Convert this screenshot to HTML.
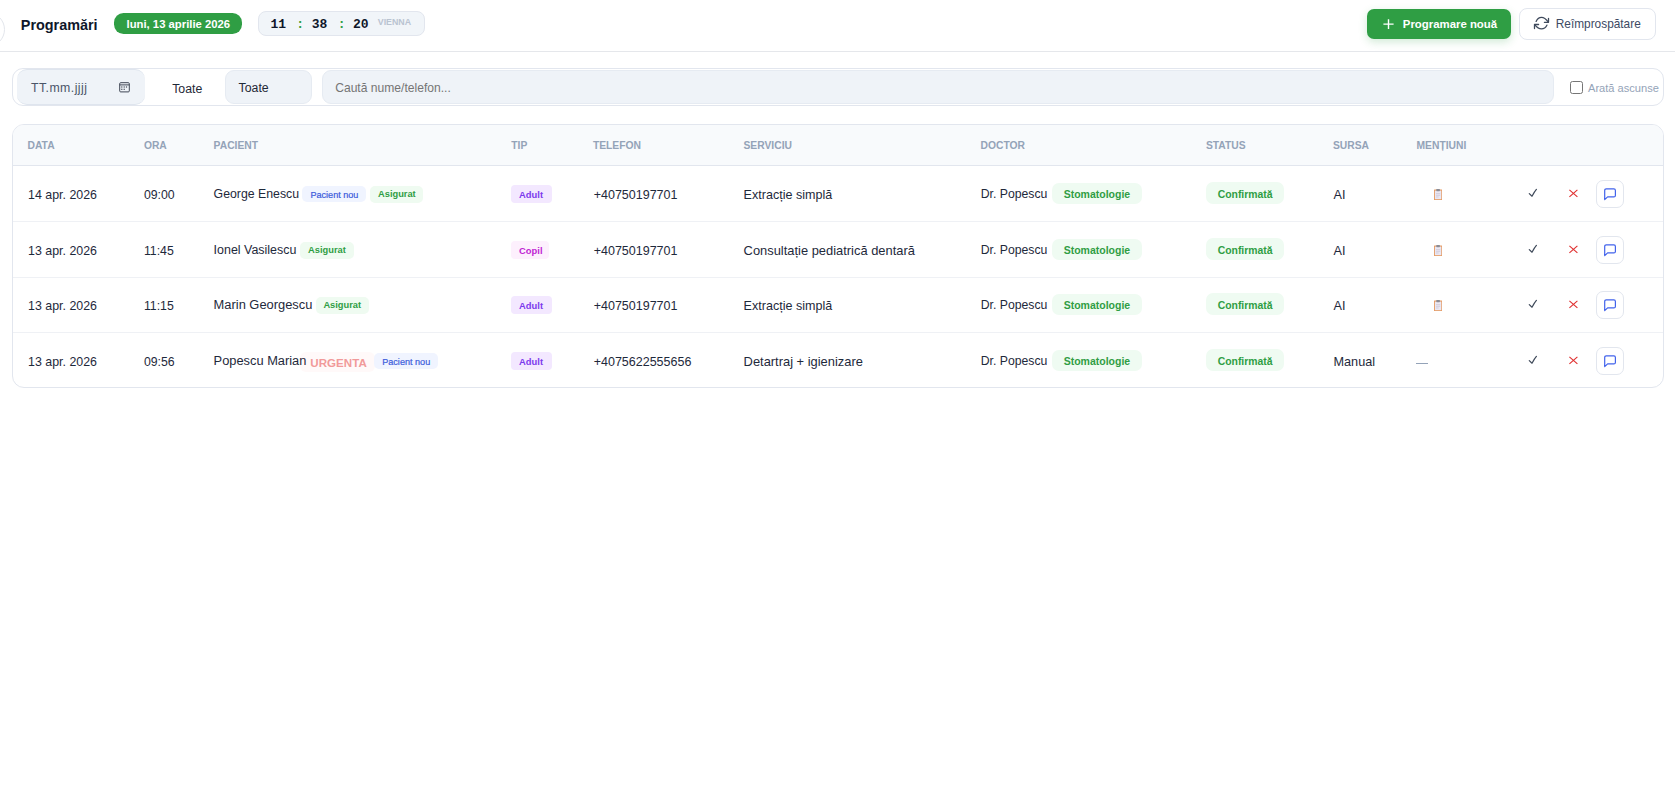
<!DOCTYPE html>
<html><head><meta charset="utf-8"><title>Programări</title>
<style>
html,body{margin:0;padding:0;}
body{width:1675px;height:808px;position:relative;overflow:hidden;background:#fff;font-family:'Liberation Sans', sans-serif;}
.t{position:absolute;white-space:nowrap;line-height:1;}
.r{position:absolute;}
</style></head><body>
<div class="r" style="left:-30.70px;top:11.50px;width:35.20px;height:35.20px;border:1.5px solid #e3e6ec;border-radius:50%;box-sizing:border-box;"></div>
<div class="t" style="left:20.80px;top:17.51px;font-size:14.4px;font-weight:700;color:#0f172a;font-family:'Liberation Sans', sans-serif;">Programări</div>
<div class="r" style="left:114.00px;top:13.00px;width:128.00px;height:21.00px;background:#2f9e44;border-radius:9.5px;"></div>
<div class="t" style="left:126.50px;top:18.73px;font-size:11.3px;font-weight:700;color:#fff;font-family:'Liberation Sans', sans-serif;">luni, 13 aprilie 2026</div>
<div class="r" style="left:258.00px;top:11.00px;width:167.00px;height:25.00px;background:#f1f5f9;border:1px solid #e2e6ee;border-radius:8px;box-sizing:border-box;"></div>
<div class="t" style="left:270.50px;top:18.20px;font-size:13px;font-weight:700;color:#0f172a;font-family:'Liberation Mono', monospace;">11</div>
<div class="t" style="left:296.20px;top:18.20px;font-size:13px;font-weight:700;color:#2f9e44;font-family:'Liberation Mono', monospace;">:</div>
<div class="t" style="left:311.80px;top:18.20px;font-size:13px;font-weight:700;color:#0f172a;font-family:'Liberation Mono', monospace;">38</div>
<div class="t" style="left:337.80px;top:18.20px;font-size:13px;font-weight:700;color:#2f9e44;font-family:'Liberation Mono', monospace;">:</div>
<div class="t" style="left:353.00px;top:18.20px;font-size:13px;font-weight:700;color:#0f172a;font-family:'Liberation Mono', monospace;">20</div>
<div class="t" style="left:377.80px;top:18.15px;font-size:8.8px;font-weight:700;color:#b9c3d1;font-family:'Liberation Sans', sans-serif;">VIENNA</div>
<div class="r" style="left:0.00px;top:51.00px;width:1675.00px;height:1.00px;background:#e5e7eb;"></div>
<div class="r" style="left:1367.00px;top:9.00px;width:144.00px;height:30.00px;background:#2f9e44;border-radius:7px;box-shadow:0 3px 8px rgba(47,158,68,.22);"></div>
<svg class="r" style="left:1382px;top:17.5px" width="13" height="12" viewBox="0 0 13 12"><path d="M6.5 1.2V11M1.4 6.1H11.6" stroke="#fff" stroke-width="1.4" fill="none"/></svg>
<div class="t" style="left:1402.80px;top:19.05px;font-size:11.4px;font-weight:700;color:#fff;font-family:'Liberation Sans', sans-serif;">Programare nouă</div>
<div class="r" style="left:1519.00px;top:8.00px;width:137.00px;height:32.00px;background:#fff;border:1px solid #e2e6ee;border-radius:8px;box-sizing:border-box;"></div>
<svg class="r" style="left:1528px;top:12px" width="28" height="24" viewBox="0 0 28 24"><g fill="none" stroke="#3f4a5c" stroke-width="1.3" stroke-linecap="round" stroke-linejoin="round"><path d="M8.1 9.4C9.4 6.6 11.3 5.4 13.5 5.4C16.1 5.4 18.2 7.2 20.2 9.9"/><path d="M20.5 6.3V10.3H16.4"/><path d="M18.9 13.2C17.6 15.9 15.7 16.9 13.5 16.9C10.9 16.9 8.7 15.2 6.7 12.6"/><path d="M10.6 12.5H6.5V16.5"/></g></svg>
<div class="t" style="left:1555.80px;top:18.77px;font-size:11.85px;font-weight:400;color:#3d4a63;font-family:'Liberation Sans', sans-serif;">Reîmprospătare</div>
<div class="r" style="left:12.00px;top:68.00px;width:1652.00px;height:38.00px;border:1px solid #e2e6ee;border-radius:11px;box-sizing:border-box;background:#fff;"></div>
<div class="r" style="left:17.00px;top:69.00px;width:128.00px;height:36.00px;background:#eff3f8;border-radius:10px;border-top:1px solid #dfe5ee;border-bottom:1px solid #dfe5ee;box-sizing:border-box;"></div>
<div class="t" style="left:31.00px;top:82.29px;font-size:12.3px;font-weight:400;color:#4a5568;font-family:'Liberation Sans', sans-serif;letter-spacing:0.45px;">TT.mm.jjjj</div>
<svg class="r" style="left:118.9px;top:81.7px" width="11" height="11" viewBox="0 0 11 11"><g fill="none" stroke="#3f4654" stroke-width="1"><rect x="0.7" y="0.7" width="9.6" height="9.2" rx="1"/><path d="M0.7 2.9H10.3"/></g><g fill="#3f4654"><rect x="2.2" y="4.4" width="1.2" height="1.2"/><rect x="4.6" y="4.4" width="1.2" height="1.2"/><rect x="6.9" y="4.4" width="1.2" height="1.2"/><rect x="2.2" y="6.7" width="1.2" height="1.2"/><rect x="4.6" y="6.7" width="1.2" height="1.2"/></g></svg>
<div class="t" style="left:172.20px;top:82.89px;font-size:12.3px;font-weight:400;color:#1f2937;font-family:'Liberation Sans', sans-serif;">Toate</div>
<div class="r" style="left:225.00px;top:70.00px;width:86.50px;height:33.60px;background:#eff3f8;border:1px solid #e6ebf2;border-radius:9px;box-sizing:border-box;"></div>
<div class="t" style="left:238.60px;top:82.19px;font-size:12.3px;font-weight:400;color:#1f2937;font-family:'Liberation Sans', sans-serif;">Toate</div>
<div class="r" style="left:322.00px;top:70.00px;width:1231.50px;height:33.50px;background:#eff3f8;border:1px solid #e6ebf2;border-radius:9px;box-sizing:border-box;"></div>
<div class="t" style="left:335.20px;top:82.36px;font-size:12.1px;font-weight:400;color:#757575;font-family:'Liberation Sans', sans-serif;">Caută nume/telefon...</div>
<div class="r" style="left:1570.00px;top:81.00px;width:13.00px;height:13.00px;border:1px solid #767676;border-radius:2.5px;box-sizing:border-box;background:#fff;"></div>
<div class="t" style="left:1588.00px;top:82.60px;font-size:11.1px;font-weight:400;color:#94a3b8;font-family:'Liberation Sans', sans-serif;">Arată ascunse</div>
<div class="r" style="left:12.00px;top:124.00px;width:1652.00px;height:264.00px;border:1px solid #e2e6ee;border-radius:12px;box-sizing:border-box;background:#fff;overflow:hidden;"></div>
<div class="r" style="left:13.00px;top:125.00px;width:1650.00px;height:40.00px;background:#f8fafc;border-radius:11px 11px 0 0;"></div>
<div class="r" style="left:13.00px;top:165.00px;width:1650.00px;height:1.00px;background:#e2e6ee;"></div>
<div class="t" style="left:27.50px;top:140.88px;font-size:10.3px;font-weight:700;color:#94a3b8;font-family:'Liberation Sans', sans-serif;">DATA</div>
<div class="t" style="left:143.90px;top:140.88px;font-size:10.3px;font-weight:700;color:#94a3b8;font-family:'Liberation Sans', sans-serif;">ORA</div>
<div class="t" style="left:213.60px;top:140.88px;font-size:10.3px;font-weight:700;color:#94a3b8;font-family:'Liberation Sans', sans-serif;">PACIENT</div>
<div class="t" style="left:511.30px;top:140.88px;font-size:10.3px;font-weight:700;color:#94a3b8;font-family:'Liberation Sans', sans-serif;">TIP</div>
<div class="t" style="left:592.90px;top:140.88px;font-size:10.3px;font-weight:700;color:#94a3b8;font-family:'Liberation Sans', sans-serif;">TELEFON</div>
<div class="t" style="left:743.50px;top:140.88px;font-size:10.3px;font-weight:700;color:#94a3b8;font-family:'Liberation Sans', sans-serif;">SERVICIU</div>
<div class="t" style="left:980.50px;top:140.88px;font-size:10.3px;font-weight:700;color:#94a3b8;font-family:'Liberation Sans', sans-serif;">DOCTOR</div>
<div class="t" style="left:1205.90px;top:140.88px;font-size:10.3px;font-weight:700;color:#94a3b8;font-family:'Liberation Sans', sans-serif;">STATUS</div>
<div class="t" style="left:1332.90px;top:140.88px;font-size:10.3px;font-weight:700;color:#94a3b8;font-family:'Liberation Sans', sans-serif;">SURSA</div>
<div class="t" style="left:1416.50px;top:140.88px;font-size:10.3px;font-weight:700;color:#94a3b8;font-family:'Liberation Sans', sans-serif;">MENȚIUNI</div>
<div class="r" style="left:13.00px;top:221.00px;width:1650.00px;height:1.00px;background:#eff1f5;"></div>
<div class="r" style="left:13.00px;top:277.00px;width:1650.00px;height:1.00px;background:#eff1f5;"></div>
<div class="r" style="left:13.00px;top:332.00px;width:1650.00px;height:1.00px;background:#eff1f5;"></div>
<div class="t" style="left:28.10px;top:189.10px;font-size:12.4px;font-weight:400;color:#1e293b;font-family:'Liberation Sans', sans-serif;">14 apr. 2026</div>
<div class="t" style="left:143.90px;top:189.19px;font-size:12.3px;font-weight:400;color:#1e293b;font-family:'Liberation Sans', sans-serif;">09:00</div>
<div class="t" style="left:213.60px;top:188.29px;font-size:12.3px;font-weight:400;color:#1e293b;font-family:'Liberation Sans', sans-serif;">George Enescu</div>
<div class="r" style="left:302.00px;top:186.20px;width:64.00px;height:15.60px;background:#f0f4ff;border-radius:5px;"></div>
<div class="t" style="left:310.40px;top:190.50px;font-size:9.1px;font-weight:400;color:#3b5bdb;font-family:'Liberation Sans', sans-serif;-webkit-text-stroke:0.2px #3b5bdb;">Pacient nou</div>
<div class="r" style="left:370.20px;top:185.80px;width:53.30px;height:17.00px;background:#effbf1;border-radius:5px;"></div>
<div class="t" style="left:378.00px;top:190.13px;font-size:9.3px;font-weight:700;color:#2f9e44;font-family:'Liberation Sans', sans-serif;">Asigurat</div>
<div class="r" style="left:511.00px;top:185.20px;width:41.00px;height:17.40px;background:#f3e8ff;border-radius:4px;"></div>
<div class="t" style="left:519.10px;top:190.04px;font-size:9.4px;font-weight:700;color:#7c3aed;font-family:'Liberation Sans', sans-serif;">Adult</div>
<div class="t" style="left:593.70px;top:189.02px;font-size:12.5px;font-weight:400;color:#1e293b;font-family:'Liberation Sans', sans-serif;">+40750197701</div>
<div class="t" style="left:743.60px;top:188.98px;font-size:12.55px;font-weight:400;color:#1e293b;font-family:'Liberation Sans', sans-serif;">Extracție simplă</div>
<div class="t" style="left:980.70px;top:188.33px;font-size:12.25px;font-weight:400;color:#1e293b;font-family:'Liberation Sans', sans-serif;">Dr. Popescu</div>
<div class="r" style="left:1052.20px;top:183.20px;width:89.50px;height:20.40px;background:#effbf2;border-radius:7px;"></div>
<div class="t" style="left:1063.70px;top:189.01px;font-size:10.5px;font-weight:700;color:#2f9e44;font-family:'Liberation Sans', sans-serif;">Stomatologie</div>
<div class="r" style="left:1205.60px;top:182.10px;width:78.40px;height:22.00px;background:#effbf2;border-radius:7px;"></div>
<div class="t" style="left:1217.70px;top:189.50px;font-size:10.4px;font-weight:700;color:#2f9e44;font-family:'Liberation Sans', sans-serif;">Confirmată</div>
<div class="t" style="left:1333.50px;top:188.65px;font-size:12.7px;font-weight:400;color:#1e293b;font-family:'Liberation Sans', sans-serif;">AI</div>
<svg class="r" style="left:1433.8px;top:188.70px" width="8.4" height="11.2" viewBox="0 0 8.4 11.2"><rect x="0" y="0.6" width="8.2" height="10.6" rx="0.5" fill="#e59a62"/><rect x="0.9" y="1.6" width="6.4" height="8.6" fill="#ebe7f2"/><rect x="2.3" y="0" width="3.6" height="2.2" rx="0.6" fill="#8a8c96"/><path d="M2 4.6H6.2M2 6.3H6.2M2 8H4.6" stroke="#c2bdd0" stroke-width="0.6"/></svg>
<svg class="r" style="left:1528px;top:188.30px" width="10" height="10" viewBox="0 0 10 10"><path d="M1.3 5.6L4 8.2C5.3 5.8 6.6 3.4 8.4 1.4" stroke="#3f4a5a" stroke-width="1.25" fill="none" stroke-linecap="round" stroke-linejoin="round"/></svg>
<svg class="r" style="left:1568px;top:188.80px" width="11" height="10" viewBox="0 0 11 10"><path d="M1.4 0.9L9.4 7.9M9.4 0.9L1.4 7.9" stroke="#e03131" stroke-width="1.15" fill="none"/></svg>
<div class="r" style="left:1596.20px;top:180.20px;width:27.50px;height:27.50px;border:1px solid #e2e6ee;border-radius:7px;box-sizing:border-box;background:#fff;"></div>
<svg class="r" style="left:1603px;top:187.80px" width="14" height="13" viewBox="0 0 14 13"><path d="M1.7 11.6V2.4Q1.7 0.8 3.3 0.8H10.9Q12.4 0.8 12.4 2.4V7.4Q12.4 8.9 10.9 8.9H4.6Z" stroke="#4263eb" stroke-width="1.2" fill="none" stroke-linejoin="round"/></svg>
<div class="t" style="left:28.10px;top:245.10px;font-size:12.4px;font-weight:400;color:#1e293b;font-family:'Liberation Sans', sans-serif;">13 apr. 2026</div>
<div class="t" style="left:143.90px;top:245.19px;font-size:12.3px;font-weight:400;color:#1e293b;font-family:'Liberation Sans', sans-serif;">11:45</div>
<div class="t" style="left:213.60px;top:244.16px;font-size:12.45px;font-weight:400;color:#1e293b;font-family:'Liberation Sans', sans-serif;">Ionel Vasilescu</div>
<div class="r" style="left:300.30px;top:241.80px;width:53.30px;height:17.00px;background:#effbf1;border-radius:5px;"></div>
<div class="t" style="left:308.10px;top:246.13px;font-size:9.3px;font-weight:700;color:#2f9e44;font-family:'Liberation Sans', sans-serif;">Asigurat</div>
<div class="r" style="left:511.00px;top:241.20px;width:38.00px;height:17.40px;background:#fdf0fd;border-radius:4px;"></div>
<div class="t" style="left:519.10px;top:246.04px;font-size:9.4px;font-weight:700;color:#c026d3;font-family:'Liberation Sans', sans-serif;">Copil</div>
<div class="t" style="left:593.70px;top:245.02px;font-size:12.5px;font-weight:400;color:#1e293b;font-family:'Liberation Sans', sans-serif;">+40750197701</div>
<div class="t" style="left:743.60px;top:244.68px;font-size:12.9px;font-weight:400;color:#1e293b;font-family:'Liberation Sans', sans-serif;">Consultație pediatrică dentară</div>
<div class="t" style="left:980.70px;top:244.33px;font-size:12.25px;font-weight:400;color:#1e293b;font-family:'Liberation Sans', sans-serif;">Dr. Popescu</div>
<div class="r" style="left:1052.20px;top:239.20px;width:89.50px;height:20.40px;background:#effbf2;border-radius:7px;"></div>
<div class="t" style="left:1063.70px;top:245.01px;font-size:10.5px;font-weight:700;color:#2f9e44;font-family:'Liberation Sans', sans-serif;">Stomatologie</div>
<div class="r" style="left:1205.60px;top:238.10px;width:78.40px;height:22.00px;background:#effbf2;border-radius:7px;"></div>
<div class="t" style="left:1217.70px;top:245.50px;font-size:10.4px;font-weight:700;color:#2f9e44;font-family:'Liberation Sans', sans-serif;">Confirmată</div>
<div class="t" style="left:1333.50px;top:244.65px;font-size:12.7px;font-weight:400;color:#1e293b;font-family:'Liberation Sans', sans-serif;">AI</div>
<svg class="r" style="left:1433.8px;top:244.70px" width="8.4" height="11.2" viewBox="0 0 8.4 11.2"><rect x="0" y="0.6" width="8.2" height="10.6" rx="0.5" fill="#e59a62"/><rect x="0.9" y="1.6" width="6.4" height="8.6" fill="#ebe7f2"/><rect x="2.3" y="0" width="3.6" height="2.2" rx="0.6" fill="#8a8c96"/><path d="M2 4.6H6.2M2 6.3H6.2M2 8H4.6" stroke="#c2bdd0" stroke-width="0.6"/></svg>
<svg class="r" style="left:1528px;top:244.30px" width="10" height="10" viewBox="0 0 10 10"><path d="M1.3 5.6L4 8.2C5.3 5.8 6.6 3.4 8.4 1.4" stroke="#3f4a5a" stroke-width="1.25" fill="none" stroke-linecap="round" stroke-linejoin="round"/></svg>
<svg class="r" style="left:1568px;top:244.80px" width="11" height="10" viewBox="0 0 11 10"><path d="M1.4 0.9L9.4 7.9M9.4 0.9L1.4 7.9" stroke="#e03131" stroke-width="1.15" fill="none"/></svg>
<div class="r" style="left:1596.20px;top:236.20px;width:27.50px;height:27.50px;border:1px solid #e2e6ee;border-radius:7px;box-sizing:border-box;background:#fff;"></div>
<svg class="r" style="left:1603px;top:243.80px" width="14" height="13" viewBox="0 0 14 13"><path d="M1.7 11.6V2.4Q1.7 0.8 3.3 0.8H10.9Q12.4 0.8 12.4 2.4V7.4Q12.4 8.9 10.9 8.9H4.6Z" stroke="#4263eb" stroke-width="1.2" fill="none" stroke-linejoin="round"/></svg>
<div class="t" style="left:28.10px;top:300.10px;font-size:12.4px;font-weight:400;color:#1e293b;font-family:'Liberation Sans', sans-serif;">13 apr. 2026</div>
<div class="t" style="left:143.90px;top:300.19px;font-size:12.3px;font-weight:400;color:#1e293b;font-family:'Liberation Sans', sans-serif;">11:15</div>
<div class="t" style="left:213.60px;top:298.80px;font-size:12.88px;font-weight:400;color:#1e293b;font-family:'Liberation Sans', sans-serif;">Marin Georgescu</div>
<div class="r" style="left:315.60px;top:296.80px;width:53.30px;height:17.00px;background:#effbf1;border-radius:5px;"></div>
<div class="t" style="left:323.40px;top:301.13px;font-size:9.3px;font-weight:700;color:#2f9e44;font-family:'Liberation Sans', sans-serif;">Asigurat</div>
<div class="r" style="left:511.00px;top:296.20px;width:41.00px;height:17.40px;background:#f3e8ff;border-radius:4px;"></div>
<div class="t" style="left:519.10px;top:301.04px;font-size:9.4px;font-weight:700;color:#7c3aed;font-family:'Liberation Sans', sans-serif;">Adult</div>
<div class="t" style="left:593.70px;top:300.02px;font-size:12.5px;font-weight:400;color:#1e293b;font-family:'Liberation Sans', sans-serif;">+40750197701</div>
<div class="t" style="left:743.60px;top:299.98px;font-size:12.55px;font-weight:400;color:#1e293b;font-family:'Liberation Sans', sans-serif;">Extracție simplă</div>
<div class="t" style="left:980.70px;top:299.33px;font-size:12.25px;font-weight:400;color:#1e293b;font-family:'Liberation Sans', sans-serif;">Dr. Popescu</div>
<div class="r" style="left:1052.20px;top:294.20px;width:89.50px;height:20.40px;background:#effbf2;border-radius:7px;"></div>
<div class="t" style="left:1063.70px;top:300.01px;font-size:10.5px;font-weight:700;color:#2f9e44;font-family:'Liberation Sans', sans-serif;">Stomatologie</div>
<div class="r" style="left:1205.60px;top:293.10px;width:78.40px;height:22.00px;background:#effbf2;border-radius:7px;"></div>
<div class="t" style="left:1217.70px;top:300.50px;font-size:10.4px;font-weight:700;color:#2f9e44;font-family:'Liberation Sans', sans-serif;">Confirmată</div>
<div class="t" style="left:1333.50px;top:299.65px;font-size:12.7px;font-weight:400;color:#1e293b;font-family:'Liberation Sans', sans-serif;">AI</div>
<svg class="r" style="left:1433.8px;top:299.70px" width="8.4" height="11.2" viewBox="0 0 8.4 11.2"><rect x="0" y="0.6" width="8.2" height="10.6" rx="0.5" fill="#e59a62"/><rect x="0.9" y="1.6" width="6.4" height="8.6" fill="#ebe7f2"/><rect x="2.3" y="0" width="3.6" height="2.2" rx="0.6" fill="#8a8c96"/><path d="M2 4.6H6.2M2 6.3H6.2M2 8H4.6" stroke="#c2bdd0" stroke-width="0.6"/></svg>
<svg class="r" style="left:1528px;top:299.30px" width="10" height="10" viewBox="0 0 10 10"><path d="M1.3 5.6L4 8.2C5.3 5.8 6.6 3.4 8.4 1.4" stroke="#3f4a5a" stroke-width="1.25" fill="none" stroke-linecap="round" stroke-linejoin="round"/></svg>
<svg class="r" style="left:1568px;top:299.80px" width="11" height="10" viewBox="0 0 11 10"><path d="M1.4 0.9L9.4 7.9M9.4 0.9L1.4 7.9" stroke="#e03131" stroke-width="1.15" fill="none"/></svg>
<div class="r" style="left:1596.20px;top:291.20px;width:27.50px;height:27.50px;border:1px solid #e2e6ee;border-radius:7px;box-sizing:border-box;background:#fff;"></div>
<svg class="r" style="left:1603px;top:298.80px" width="14" height="13" viewBox="0 0 14 13"><path d="M1.7 11.6V2.4Q1.7 0.8 3.3 0.8H10.9Q12.4 0.8 12.4 2.4V7.4Q12.4 8.9 10.9 8.9H4.6Z" stroke="#4263eb" stroke-width="1.2" fill="none" stroke-linejoin="round"/></svg>
<div class="t" style="left:28.10px;top:356.20px;font-size:12.4px;font-weight:400;color:#1e293b;font-family:'Liberation Sans', sans-serif;">13 apr. 2026</div>
<div class="t" style="left:143.90px;top:356.29px;font-size:12.3px;font-weight:400;color:#1e293b;font-family:'Liberation Sans', sans-serif;">09:56</div>
<div class="t" style="left:213.60px;top:354.92px;font-size:12.85px;font-weight:400;color:#1e293b;font-family:'Liberation Sans', sans-serif;">Popescu Marian</div>
<div class="r" style="left:299.60px;top:352.20px;width:75.90px;height:19.60px;background:rgba(250,82,82,.035);border-radius:6px;"></div>
<div class="t" style="left:310.30px;top:357.38px;font-size:11.6px;font-weight:700;color:#f19a9a;font-family:'Liberation Sans', sans-serif;">URGENTA</div>
<div class="r" style="left:373.80px;top:353.30px;width:64.00px;height:15.60px;background:#f0f4ff;border-radius:5px;"></div>
<div class="t" style="left:382.20px;top:357.60px;font-size:9.1px;font-weight:400;color:#3b5bdb;font-family:'Liberation Sans', sans-serif;-webkit-text-stroke:0.2px #3b5bdb;">Pacient nou</div>
<div class="r" style="left:511.00px;top:352.30px;width:41.00px;height:17.40px;background:#f3e8ff;border-radius:4px;"></div>
<div class="t" style="left:519.10px;top:357.14px;font-size:9.4px;font-weight:700;color:#7c3aed;font-family:'Liberation Sans', sans-serif;">Adult</div>
<div class="t" style="left:593.70px;top:356.12px;font-size:12.5px;font-weight:400;color:#1e293b;font-family:'Liberation Sans', sans-serif;">+4075622555656</div>
<div class="t" style="left:743.60px;top:355.78px;font-size:12.9px;font-weight:400;color:#1e293b;font-family:'Liberation Sans', sans-serif;">Detartraj + igienizare</div>
<div class="t" style="left:980.70px;top:355.43px;font-size:12.25px;font-weight:400;color:#1e293b;font-family:'Liberation Sans', sans-serif;">Dr. Popescu</div>
<div class="r" style="left:1052.20px;top:350.30px;width:89.50px;height:20.40px;background:#effbf2;border-radius:7px;"></div>
<div class="t" style="left:1063.70px;top:356.11px;font-size:10.5px;font-weight:700;color:#2f9e44;font-family:'Liberation Sans', sans-serif;">Stomatologie</div>
<div class="r" style="left:1205.60px;top:349.20px;width:78.40px;height:22.00px;background:#effbf2;border-radius:7px;"></div>
<div class="t" style="left:1217.70px;top:356.60px;font-size:10.4px;font-weight:700;color:#2f9e44;font-family:'Liberation Sans', sans-serif;">Confirmată</div>
<div class="t" style="left:1333.50px;top:355.75px;font-size:12.7px;font-weight:400;color:#1e293b;font-family:'Liberation Sans', sans-serif;">Manual</div>
<div class="r" style="left:1416.00px;top:362.60px;width:12.00px;height:1.00px;background:#94a3b8;"></div>
<svg class="r" style="left:1528px;top:355.40px" width="10" height="10" viewBox="0 0 10 10"><path d="M1.3 5.6L4 8.2C5.3 5.8 6.6 3.4 8.4 1.4" stroke="#3f4a5a" stroke-width="1.25" fill="none" stroke-linecap="round" stroke-linejoin="round"/></svg>
<svg class="r" style="left:1568px;top:355.90px" width="11" height="10" viewBox="0 0 11 10"><path d="M1.4 0.9L9.4 7.9M9.4 0.9L1.4 7.9" stroke="#e03131" stroke-width="1.15" fill="none"/></svg>
<div class="r" style="left:1596.20px;top:347.30px;width:27.50px;height:27.50px;border:1px solid #e2e6ee;border-radius:7px;box-sizing:border-box;background:#fff;"></div>
<svg class="r" style="left:1603px;top:354.90px" width="14" height="13" viewBox="0 0 14 13"><path d="M1.7 11.6V2.4Q1.7 0.8 3.3 0.8H10.9Q12.4 0.8 12.4 2.4V7.4Q12.4 8.9 10.9 8.9H4.6Z" stroke="#4263eb" stroke-width="1.2" fill="none" stroke-linejoin="round"/></svg>
</body></html>
